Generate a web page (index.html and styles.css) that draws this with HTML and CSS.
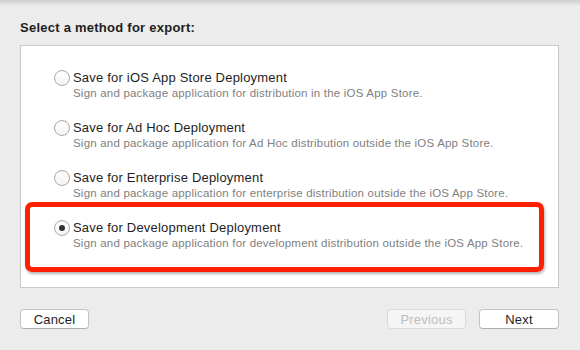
FILE: index.html
```html
<!DOCTYPE html>
<html lang="en">
<head>
    <meta charset="UTF-8">
    <title>Export</title>
    <link rel="stylesheet" href="styles.css">
</head>
<body>
    <div class="sheet">
        <h1 class="prompt">Select a method for export:</h1>

        <div class="methods">
            <label class="method">
                <span class="radio"></span>
                <span class="method-text">
                    <span class="method-title">Save for iOS App Store Deployment</span>
                    <span class="method-desc">Sign and package application for distribution in the iOS App Store.</span>
                </span>
            </label>

            <label class="method">
                <span class="radio"></span>
                <span class="method-text">
                    <span class="method-title">Save for Ad Hoc Deployment</span>
                    <span class="method-desc">Sign and package application for Ad Hoc distribution outside the iOS App Store.</span>
                </span>
            </label>

            <label class="method">
                <span class="radio"></span>
                <span class="method-text">
                    <span class="method-title">Save for Enterprise Deployment</span>
                    <span class="method-desc">Sign and package application for enterprise distribution outside the iOS App Store.</span>
                </span>
            </label>

            <label class="method highlight">
                <span class="radio checked"></span>
                <span class="method-text">
                    <span class="method-title">Save for Development Deployment</span>
                    <span class="method-desc">Sign and package application for development distribution outside the iOS App Store.</span>
                </span>
            </label>
        </div>

        <div class="actions">
            <button type="button" class="button cancel">Cancel</button>
            <span class="spacer"></span>
            <button type="button" class="button previous" disabled>Previous</button>
            <button type="button" class="button next">Next</button>
        </div>
    </div>
</body>
</html>
```

FILE: styles.css
```css
body {
    font-family: "Liberation Sans", Arial, sans-serif;
    background-color: #ececec;
    background-image: linear-gradient(to bottom, rgba(0, 0, 0, 0.13), rgba(0, 0, 0, 0) 6px);
    background-repeat: no-repeat;
    margin: 0;
    padding: 0;
    height: 350px;
    color: #1e1e1e;
}
.sheet {
    padding: 20px 21px 0 20px;
}
.prompt {
    font-size: 13px;
    line-height: 16px;
    font-weight: bold;
    letter-spacing: 0.25px;
    margin: 0 0 9px 0;
}
.methods {
    box-sizing: border-box;
    height: 243px;
    background-color: white;
    border: 1px solid #c9c9c9;
    padding-top: 24px;
}
.method {
    display: flex;
    align-items: flex-start;
    margin: 20px 0 0 0;
    padding-left: 33px;
}
.method:first-child {
    margin-top: 0;
}
.radio {
    box-sizing: border-box;
    width: 16px;
    height: 16px;
    border: 1px solid #a9a9a9;
    border-radius: 50%;
    background: linear-gradient(#ffffff, #f4f4f4);
    box-shadow: inset 0 1px 1px rgba(0, 0, 0, 0.04);
    display: flex;
    align-items: center;
    justify-content: center;
    flex-shrink: 0;
}
.radio.checked::after {
    content: "";
    width: 6px;
    height: 6px;
    border-radius: 50%;
    background-color: #333;
}
.method-text {
    display: flex;
    flex-direction: column;
    margin-left: 3px;
}
.method-title {
    font-size: 13px;
    line-height: 16px;
    letter-spacing: 0.2px;
}
.method-desc {
    font-size: 11.5px;
    line-height: 14px;
    letter-spacing: 0.2px;
    color: #808080;
}
.highlight {
    margin: 2px 14px 0 4px;
    padding: 13px 0 17px 24px;
    border: 5px solid #fe2000;
    border-radius: 7px;
    box-shadow: 1px 2px 3px rgba(0, 0, 0, 0.3);
}
.actions {
    display: flex;
    gap: 13px;
    margin-top: 21px;
}
.spacer {
    flex: 1;
}
.button {
    font-family: inherit;
    font-size: 13px;
    letter-spacing: 0.2px;
    height: 20px;
    padding: 0;
    background-color: white;
    color: #1e1e1e;
    border: 1px solid #c4c4c4;
    border-bottom-color: #adadad;
    border-radius: 4px;
}
.cancel {
    width: 69px;
}
.previous {
    width: 79px;
    color: #bdbdbd;
    background-color: #f5f5f5;
    border-color: #dadada;
}
.next {
    width: 80px;
}
```
